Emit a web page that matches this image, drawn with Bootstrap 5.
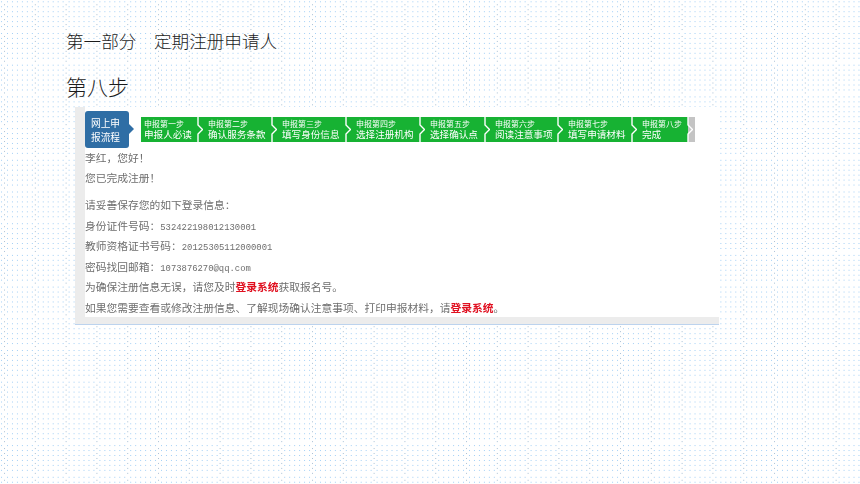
<!doctype html>
<html lang="zh"><head><meta charset="utf-8">
<link href="https://cdn.jsdelivr.net/npm/bootstrap@5.3.0/dist/css/bootstrap.min.css" rel="stylesheet">
<style>
html,body{height:100%}
body{margin:0;background-color:#fff;color:#333;font-family:"Noto Sans CJK SC",sans-serif;overflow:hidden;
background-image:url("data:image/svg+xml,%3Csvg xmlns='http://www.w3.org/2000/svg' width='860' height='484'%3E%3Cdefs%3E%3Cpattern id='p' patternUnits='userSpaceOnUse' x='7' y='1.3' width='30.8' height='31.7'%3E%3Cpath d='M0 .5H30M0 5.5H30M0 10.5H30M0 15.5H30M0 20.5H30M0 25.5H30' fill='none' stroke='%23a3cff5' stroke-dasharray='1 4' shape-rendering='crispEdges'/%3E%3Cpath d='M28.5 3V31.7' fill='none' stroke='%23a9c0d4' stroke-dasharray='1 4' shape-rendering='crispEdges'/%3E%3C/pattern%3E%3C/defs%3E%3Crect width='860' height='484' fill='url(%23p)'/%3E%3C/svg%3E");background-repeat:no-repeat}
.slide{width:860px;height:484px;padding:30px 0 0 66px}
.part-title{font-size:17.6px;line-height:22px;font-weight:300;margin:0;color:#1c1c1c}
.step-title{font-size:21px;line-height:28px;font-weight:300;margin:20px 0 0;color:#1c1c1c}
.shot{width:644px;height:218px;margin:7px 0 0 9px;background:#fff;border-bottom:1px solid #bcd3ee;padding:4px 0 7px 10px;box-shadow:inset 10px 0 0 #ececec,inset 0 -7px 0 #ececec;filter:blur(.35px)}
.flow-tag{width:44px;height:37px;background:#2f6ea5;border-radius:3px;color:#fff;font-size:9.7px;line-height:14px;padding:5px 0 0 6px;position:relative;flex:none}
.flow-tag::after{content:"";position:absolute;left:44px;top:13px;border-left:5px solid #2f6ea5;border-top:5px solid transparent;border-bottom:5px solid transparent}
.flow-steps{margin:6px 0 0 12px;height:25px}
.flow-step{height:25px;background:#17b233;color:#fff;position:relative;padding:2px 0 0 10px;white-space:nowrap;flex:none}
.flow-step:first-child{padding-left:3px}
.flow-step small{display:block;font-size:8px;line-height:9.5px}
.flow-step span{display:block;font-size:9.6px;line-height:10.5px}
.flow-step svg{position:absolute;right:-5px;top:0;width:6px;height:25px;z-index:1}
.flow-end{width:7px;height:25px;background:#c4c4c4;flex:none}
.msg{font-size:10.75px;color:#6e6e6e;line-height:14px;height:14px;white-space:nowrap}
.num{font-family:"Liberation Mono",monospace;font-size:8.9px}
.msg b{color:#e01020;font-weight:700}
</style></head><body>
<div class="slide">
<h1 class="part-title">第一部分　定期注册申请人</h1>
<h2 class="step-title">第八步</h2>
<div class="shot">
 <div class="d-flex">
  <div class="flow-tag">网上申<br>报流程</div>
  <div class="d-flex flow-steps">
   <div class="flow-step" style="width:57px"><small>申报第一步</small><span>申报人必读</span><svg viewBox="0 0 6 25"><path d="M1 0V8L5.5 12.5L1 17V25" fill="none" stroke="#fff" stroke-width="1.4"/></svg></div>
   <div class="flow-step" style="width:74px"><small>申报第二步</small><span>确认服务条款</span><svg viewBox="0 0 6 25"><path d="M1 0V8L5.5 12.5L1 17V25" fill="none" stroke="#fff" stroke-width="1.4"/></svg></div>
   <div class="flow-step" style="width:74px"><small>申报第三步</small><span>填写身份信息</span><svg viewBox="0 0 6 25"><path d="M1 0V8L5.5 12.5L1 17V25" fill="none" stroke="#fff" stroke-width="1.4"/></svg></div>
   <div class="flow-step" style="width:74px"><small>申报第四步</small><span>选择注册机构</span><svg viewBox="0 0 6 25"><path d="M1 0V8L5.5 12.5L1 17V25" fill="none" stroke="#fff" stroke-width="1.4"/></svg></div>
   <div class="flow-step" style="width:65px"><small>申报第五步</small><span>选择确认点</span><svg viewBox="0 0 6 25"><path d="M1 0V8L5.5 12.5L1 17V25" fill="none" stroke="#fff" stroke-width="1.4"/></svg></div>
   <div class="flow-step" style="width:73px"><small>申报第六步</small><span>阅读注意事项</span><svg viewBox="0 0 6 25"><path d="M1 0V8L5.5 12.5L1 17V25" fill="none" stroke="#fff" stroke-width="1.4"/></svg></div>
   <div class="flow-step" style="width:74px"><small>申报第七步</small><span>填写申请材料</span><svg viewBox="0 0 6 25"><path d="M1 0V8L5.5 12.5L1 17V25" fill="none" stroke="#fff" stroke-width="1.4"/></svg></div>
   <div class="flow-step" style="width:56px"><small>申报第八步</small><span>完成</span><svg viewBox="0 0 6 25"><path d="M1 0V8L5.5 12.5L1 17V25" fill="none" stroke="#fff" stroke-width="1.4"/></svg></div>
   <div class="flow-end"></div>
  </div>
 </div>
 <div class="msg" style="margin-top:3px">李红，您好！</div>
 <div class="msg" style="margin-top:6px">您已完成注册！</div>
 <div class="msg" style="margin-top:13px">请妥善保存您的如下登录信息：</div>
 <div class="msg" style="margin-top:7px">身份证件号码：<span class="num">532422198012130001</span></div>
 <div class="msg" style="margin-top:6px">教师资格证书号码：<span class="num">20125305112000001</span></div>
 <div class="msg" style="margin-top:7px">密码找回邮箱：<span class="num">1073876270@qq.com</span></div>
 <div class="msg" style="margin-top:6px">为确保注册信息无误，请您及时<b>登录系统</b>获取报名号。</div>
 <div class="msg" style="margin-top:7px">如果您需要查看或修改注册信息、了解现场确认注意事项、打印申报材料，请<b>登录系统</b>。</div>
</div>
</div>
<script src="https://cdn.jsdelivr.net/npm/bootstrap@5.3.0/dist/js/bootstrap.bundle.min.js"></script>
</body></html>
